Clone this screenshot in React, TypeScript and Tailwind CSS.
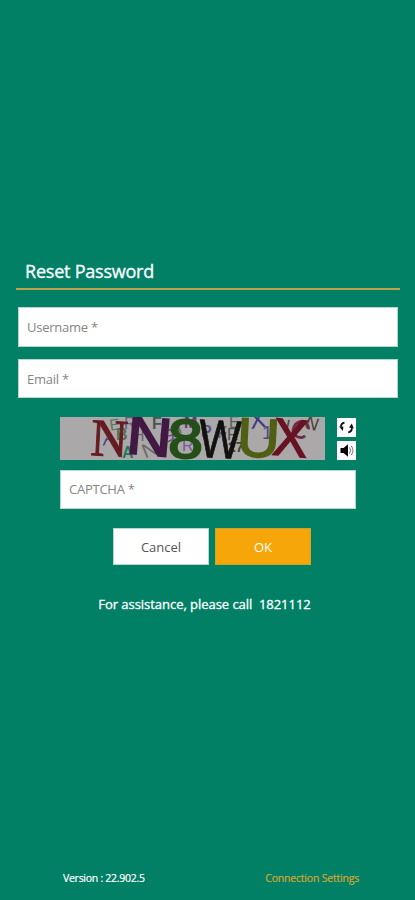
import { useState } from "react";

interface FormInputProps {
  id: string;
  label: string;
  type?: string;
  className?: string;
  value: string;
  onChange: (id: string, value: string) => void;
}

function FormInput({ id, label, type = "text", className = "", value, onChange }: FormInputProps) {
  return (
    <input
      id={id}
      type={type}
      value={value}
      placeholder={`${label} *`}
      onChange={(e) => onChange(id, e.target.value)}
      className={`block w-full border border-[#b5d9d0] bg-white px-[8.5px] text-[13px] tracking-[-0.25px] text-[#444] outline-none placeholder:text-[#858585] ${className}`}
    />
  );
}

function CaptchaImage() {
  return (
    <svg viewBox="0 0 265 43" className="h-[43px] w-[265px] bg-[#aaa8a9]" role="img" aria-label="captcha">
      {/* small background noise */}
      <g fontFamily="Liberation Sans, sans-serif" fontSize="16">
        <text x="50" y="13" fill="#5d7c5d" transform="rotate(-8 55 12)">E</text>
        <text x="56" y="23" fill="#5a6f55" fontWeight="bold">B</text>
        <text x="44" y="30" fill="#403c82" transform="rotate(25 48 24)">r</text>
        <text x="62" y="41" fill="#1f7a5c" fontWeight="bold">A</text>
        <text x="64" y="12" fill="#735a7e">R</text>
        <text x="82" y="39" fill="#666b62" fontSize="20" transform="rotate(-22 90 32)">N</text>
        <text x="73" y="24" fill="#6d6070">H</text>
        <text x="92" y="12" fill="#4a554d" fontWeight="bold">F</text>
        <text x="100" y="26" fill="#75488c" fontSize="19" transform="rotate(-15 104 20)">G</text>
        <text x="112" y="13" fill="#566b56" transform="rotate(18 112 12)">K</text>
        <text x="124" y="11" fill="#633a78" fontWeight="bold">M</text>
        <text x="122" y="34" fill="#795c99">R</text>
        <text x="141" y="20" fill="#5c5290" fontWeight="bold">P</text>
        <text x="157" y="21" fill="#605c79" fontWeight="bold">F</text>
        <text x="169" y="11" fill="#565f56">E</text>
        <text x="167" y="23" fill="#505550">R</text>
        <text x="168" y="35" fill="#3c4434" fontSize="14" fontWeight="bold">27</text>
      </g>
      <g fontFamily="Liberation Sans, sans-serif">
        <text x="190" y="11" fill="#3e3680" fontSize="24" transform="rotate(-8 198 6)">X</text>
        <text x="202" y="22" fill="#544786" fontSize="19">1</text>
        <text x="219" y="16" fill="#59403f" fontSize="18" transform="rotate(-10 226 10)">V</text>
        <text x="231" y="21" fill="#702846" stroke="#702846" strokeWidth=".7" fontSize="25" transform="rotate(28 240 13)">C</text>
        <text x="246" y="12" fill="#4c4134" fontSize="18" transform="rotate(20 251 5)">N</text>
      </g>
      {/* challenge characters */}
      <text x="31" y="39" fill="#641c22" stroke="#641c22" strokeWidth="1" fontFamily="Liberation Serif, serif" fontSize="53" textLength="37" lengthAdjust="spacingAndGlyphs" transform="rotate(3 49 21)">N</text>
      <text x="67" y="38" fill="#421943" stroke="#421943" strokeWidth="2" fontFamily="Liberation Sans, sans-serif" fontSize="54" textLength="45" lengthAdjust="spacingAndGlyphs" transform="rotate(5 90 20)">N</text>
      <text x="108" y="41" fill="#254f19" stroke="#254f19" strokeWidth="2" fontFamily="Liberation Sans, sans-serif" fontSize="55" textLength="35" lengthAdjust="spacingAndGlyphs">8</text>
      <text x="139" y="41" fill="#11120f" stroke="#11120f" strokeWidth=".8" fontFamily="Liberation Sans, sans-serif" fontSize="54" textLength="42" lengthAdjust="spacingAndGlyphs" transform="rotate(3 160 20)">W</text>
      <text x="177" y="40" fill="#505f13" stroke="#505f13" strokeWidth="1.5" fontFamily="Liberation Sans, sans-serif" fontSize="55" textLength="43" lengthAdjust="spacingAndGlyphs" transform="rotate(3 199 20)">U</text>
      <text x="213" y="39" fill="#681323" stroke="#681323" strokeWidth="1.5" fontFamily="Liberation Sans, sans-serif" fontSize="53" textLength="35" lengthAdjust="spacingAndGlyphs" transform="rotate(5 230 20)">X</text>
    </svg>
  );
}

function RefreshIcon() {
  return (
    <svg viewBox="0 0 19 19" className="h-[19px] w-[19px]">
      <path d="M7.5 4.6C5.2 5 4 6.6 3.9 8.6M11.2 14.3c2.4-.4 3.6-2 3.7-4.2" fill="none" stroke="#111" strokeWidth="1.8" />
      <path d="m2 8.3 4.4.4L5.8 13zM12 9.6l2.8-4.2 2 5z" fill="#111" />
    </svg>
  );
}

function SpeakerIcon() {
  return (
    <svg viewBox="0 0 19 19" className="h-[19px] w-[19px]">
      <path d="M3.5 7h3L11 3.2v12.6L6.5 12h-3z" fill="#080808" />
      <path d="M12.5 6.5q2.4 3 0 6M14.3 4.9q3.3 4.6 0 9.2" fill="none" stroke="#777" strokeWidth="1" />
    </svg>
  );
}

function App() {
  const [values, setValues] = useState<Record<string, string>>({
    username: "",
    email: "",
    captcha: "",
  });

  const handleChange = (id: string, value: string) => {
    setValues((prev) => ({ ...prev, [id]: value }));
  };

  return (
    <div className="flex h-[900px] w-[415px] flex-col overflow-hidden bg-[#018066] pt-[257px] font-['Open_Sans','Noto_Sans',sans-serif]">
      <header className="mx-4 h-[33px] w-[384px] border-b-2 border-[#b9a34b] pl-[9px]">
        <h1 className="w-fit whitespace-nowrap text-[18px] leading-[28px] tracking-[-0.22px] text-white [-webkit-text-stroke:0.3px_white]">Reset Password</h1>
      </header>

      <form className="flex flex-col items-center" onSubmit={(e) => e.preventDefault()}>
        <div className="mt-[17px] flex w-[380px] flex-col gap-3">
          <FormInput id="username" label="Username" className="h-10" value={values.username} onChange={handleChange} />
          <FormInput id="email" label="Email" type="email" className="h-[39px]" value={values.email} onChange={handleChange} />
        </div>

        <div className="mt-[19px] flex w-[296px] justify-between">
          <CaptchaImage />
          <div className="flex flex-col gap-1 pt-px">
            <button type="button" aria-label="Refresh captcha" className="bg-white"><RefreshIcon /></button>
            <button type="button" aria-label="Play captcha" className="bg-white"><SpeakerIcon /></button>
          </div>
        </div>
        <div className="mt-[10px] w-[296px]">
          <FormInput id="captcha" label="CAPTCHA" className="h-[39px] pb-px" value={values.captcha} onChange={handleChange} />
        </div>

        <div className="mt-[19px] ml-[9px] flex gap-[6px] text-[13px]">
          <button type="button" className="h-[37px] w-[96px] border border-[#b5d9d0] bg-white pt-[2px] text-[#555]">Cancel</button>
          <button type="submit" className="h-[37px] w-[96px] border border-[#c9a72b] bg-[#f7a60a] pt-[2px] text-white">OK</button>
        </div>
      </form>

      <p className="mt-[29px] pr-[6px] text-center text-[13px] leading-5 tracking-[-0.04px] whitespace-pre text-white [-webkit-text-stroke:0.3px_white]">For assistance, please call  1821112</p>

      <footer className="mt-auto mb-3 flex justify-between pr-[56px] pl-[63px] text-[10.5px] leading-5">
        <span className="tracking-[-0.27px] text-white [-webkit-text-stroke:0.2px_white]">Version : 22.902.5</span>
        <a href="#" className="tracking-[-0.2px] text-[#d7a62f] [-webkit-text-stroke:0.2px_#d7a62f]">Connection Settings</a>
      </footer>
    </div>
  );
}

export default App;
